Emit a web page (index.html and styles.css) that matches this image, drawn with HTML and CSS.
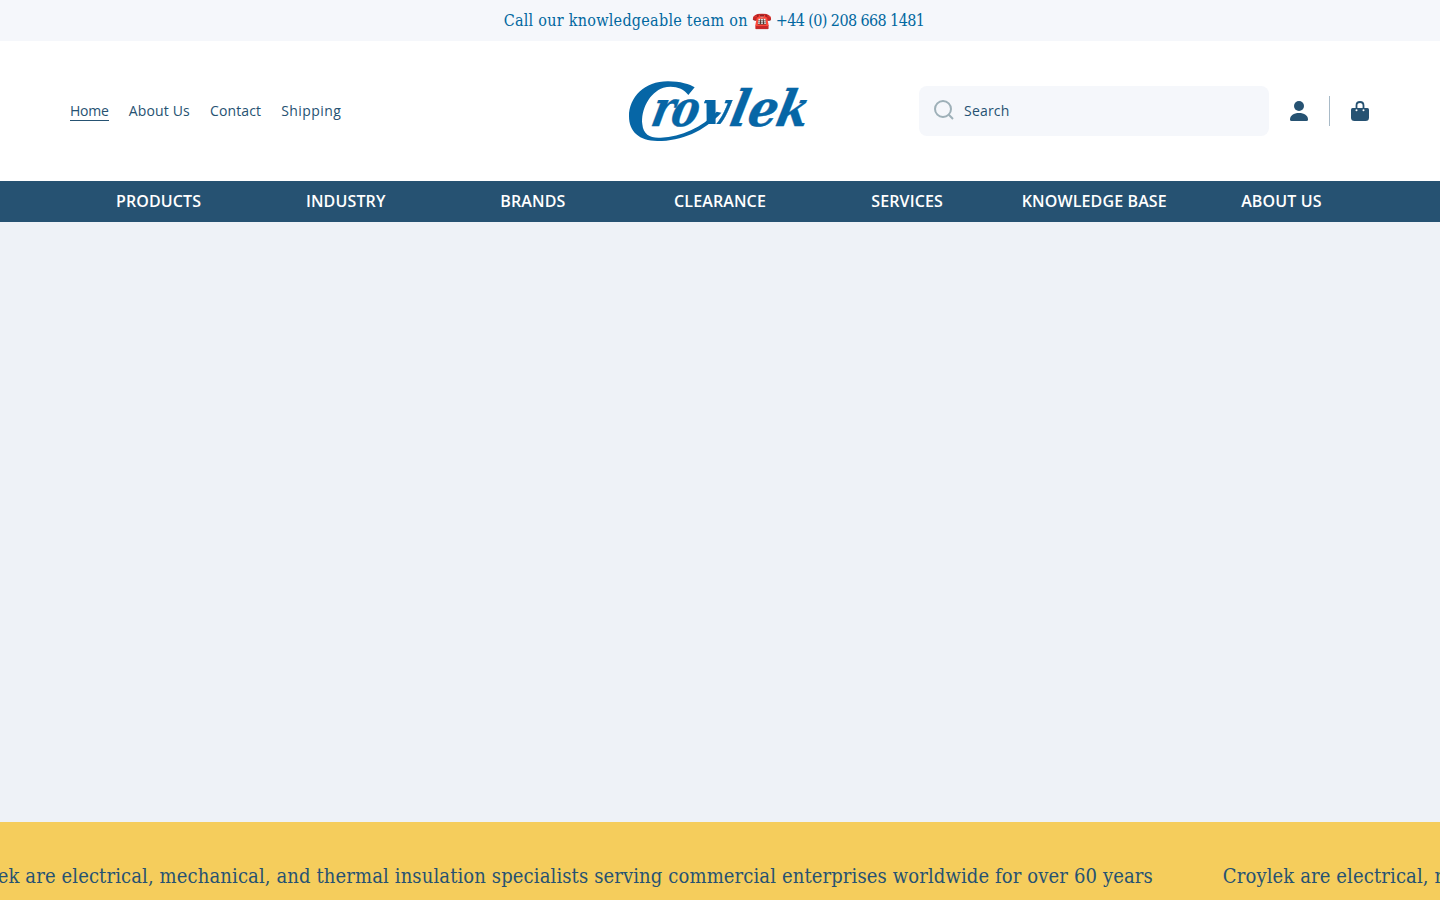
FILE: index.html
```html
<!DOCTYPE html>
<html lang="en">
<head>
    <meta charset="UTF-8">
    <meta name="viewport" content="width=device-width, initial-scale=1.0">
    <title>Croylek</title>
    <link rel="stylesheet" href="styles.css">
</head>
<body>
    <div class="announcement">
        <span class="call-text">Call our knowledgeable team on</span>
        <span class="phone-icon">☎️</span>
        <span class="call-number">+44 (0) 208 668 1481</span>
    </div>

    <header class="header">
        <nav class="top-links">
            <a href="#" class="active">Home</a>
            <a href="#">About Us</a>
            <a href="#">Contact</a>
            <a href="#" class="shipping">Shipping</a>
        </nav>

        <a href="#" class="logo" aria-label="Croylek">
            <svg viewBox="27 18 531 180" width="177" height="60">
                <clipPath id="baseline"><rect x="-50" y="-150" width="700" height="144"/></clipPath>
                <path d="M205 60 C190 38 158 30 130 38 C88 52 62 105 67 148 C70 180 92 190 122 188 C185 184 245 158 290 110 L304 113 C252 169 185 198 112 198 C58 198 27 170 27 124 C27 66 75 18 145 19 C180 19 210 28 224 37 Z"/>
                <g transform="translate(90 153) skewX(-12)">
                    <text transform="scale(.82 1)" x="-2 70" y="0">ro</text>
                    <text transform="translate(141 0) scale(.94 1)" clip-path="url(#baseline)">y</text>
                    <text transform="translate(234 0) scale(.92 1)" x="0 58 150" y="0">lek</text>
                </g>
            </svg>
        </a>

        <div class="header-right">
            <form class="search">
                <svg viewBox="0 0 20 20" width="20" height="20">
                    <circle cx="9" cy="9" r="8"/>
                    <path d="M14.8 14.8L19 19"/>
                </svg>
                <input type="text" placeholder="Search">
            </form>
            <a href="#" class="account" aria-label="Account">
                <svg viewBox="0 0 20 20" width="20" height="20">
                    <circle cx="10" cy="5" r="5"/>
                    <path d="M1 18.5C1 14.5 4.8 12 10 12S19 14.500 19 18.500Q19 20 17.500 20H2.500Q1 20 1 18.500Z"/>
                </svg>
            </a>
            <a href="#" class="cart" aria-label="Cart">
                <svg viewBox="0 0 20 20" width="20" height="20">
                    <path class="bag" d="M2.500 7H17.500Q19 7 19 8.500V16.500Q19 20 15.500 20H4.500Q1 20 1 16.500V8.500Q1 7 2.500 7Z"/>
                    <path class="handle" d="M6.500 8V4.500C6.500 -.2 13.500 -.2 13.500 4.500V8"/>
                    <circle class="dot" cx="6.500" cy="9.300" r="1"/>
                    <circle class="dot" cx="13.500" cy="9.300" r="1"/>
                </svg>
            </a>
        </div>
    </header>

    <nav class="main-nav">
        <ul>
            <li><a href="#">PRODUCTS</a></li>
            <li><a href="#">INDUSTRY</a></li>
            <li><a href="#">BRANDS</a></li>
            <li><a href="#">CLEARANCE</a></li>
            <li><a href="#">SERVICES</a></li>
            <li><a href="#">KNOWLEDGE BASE</a></li>
            <li><a href="#">ABOUT US</a></li>
        </ul>
    </nav>

    <main class="slideshow"></main>

    <section class="ticker">
        <div class="ticker-track">
            <p>Croylek are electrical, mechanical, and thermal insulation specialists serving commercial enterprises worldwide for over 60 years</p>
            <p>Croylek are electrical, mechanical, and thermal insulation specialists serving commercial enterprises worldwide for over 60 years</p>
        </div>
    </section>
</body>
</html>
```
FILE: styles.css
```css
* {
    box-sizing: border-box;
}
body {
    margin: 0;
    height: 900px;
    overflow: hidden;
    font-family: "Open Sans", sans-serif;
    color: #265272;
    background-color: #fff;
}
a {
    color: inherit;
    text-decoration: none;
}
p {
    margin: 0;
}

/* Announcement bar */
.announcement {
    height: 41px;
    padding-right: 12px;
    display: flex;
    justify-content: center;
    gap: 4px;
    background-color: #f5f7fb;
    color: #0268a0;
    font-family: "Roboto Slab", "DejaVu Serif Condensed", "DejaVu Serif", serif;
    font-size: 16px;
    line-height: 41px;
    white-space: nowrap;
}
.call-text {
    letter-spacing: 0.26px;
}
.call-number {
    letter-spacing: -0.6px;
}

/* Header */
.header {
    height: 140px;
    padding: 0 70px;
    display: grid;
    grid-template-columns: 1fr 177px 1fr;
    align-items: center;
}
.top-links {
    display: flex;
    gap: 20px;
    font-size: 14px;
    line-height: 19px;
    letter-spacing: 0.15px;
}
.top-links a {
    border-bottom: 1px solid transparent;
}
.top-links .active {
    border-bottom-color: #265272;
    letter-spacing: -0.2px;
}
.top-links .shipping {
    letter-spacing: 0.42px;
}
.logo {
    height: 60px;
    margin-left: -3px;
}
.logo svg {
    display: block;
    overflow: visible;
    fill: #0666a6;
}
.logo text {
    font-family: "DejaVu Serif", serif;
    font-size: 150px;
    font-weight: bold;
    font-style: italic;
    stroke: #0666a6;
    stroke-width: 1;
}
.header-right {
    display: flex;
    align-items: center;
    justify-content: flex-end;
}
.search {
    width: 350px;
    height: 50px;
    padding: 0 15px;
    display: flex;
    align-items: center;
    gap: 10px;
    border-radius: 8px;
    background-color: #f5f7fb;
}
.search svg {
    margin-top: -2px;
    fill: none;
    stroke: #9eb0b8;
    stroke-width: 2;
}
.search input {
    width: 250px;
    padding: 0 0 2px;
    border: 0;
    outline: 0;
    background: none;
    color: #265272;
    font: 14px "Open Sans", sans-serif;
    letter-spacing: 0.2px;
}
.search input::placeholder {
    color: #265272;
    opacity: 1;
}
.account,
.cart {
    height: 30px;
    display: flex;
    align-items: center;
    fill: #265272;
}
.account {
    padding: 0 20px;
    border-right: 1px solid #a8bac7;
}
.cart {
    padding-left: 20px;
}
.cart .handle {
    fill: none;
    stroke: #265272;
    stroke-width: 1.8;
}
.cart .dot {
    fill: #fff;
}

/* Main menu */
.main-nav {
    height: 41px;
    padding: 0 65px;
    background-color: #265272;
}
.main-nav ul {
    margin: 0;
    padding: 0;
    display: grid;
    grid-template-columns: repeat(7, 1fr);
    list-style: none;
    text-align: center;
}
.main-nav a {
    color: #fff;
    font-size: 16px;
    font-weight: 600;
    line-height: 40px;
    letter-spacing: 0.13px;
}

.slideshow {
    height: 600px;
    background-color: #eef2f7;
}

/* Scrolling text */
.ticker {
    height: 78px;
    overflow: hidden;
    background-color: #f5cd5c;
}
.ticker-track {
    margin-left: -52px;
    padding-top: 39px;
    display: flex;
    gap: 70px;
    font-family: "Roboto Slab", "DejaVu Serif Condensed", "DejaVu Serif", serif;
    font-size: 20px;
    line-height: 30px;
    letter-spacing: 0.12px;
    white-space: nowrap;
}
```
